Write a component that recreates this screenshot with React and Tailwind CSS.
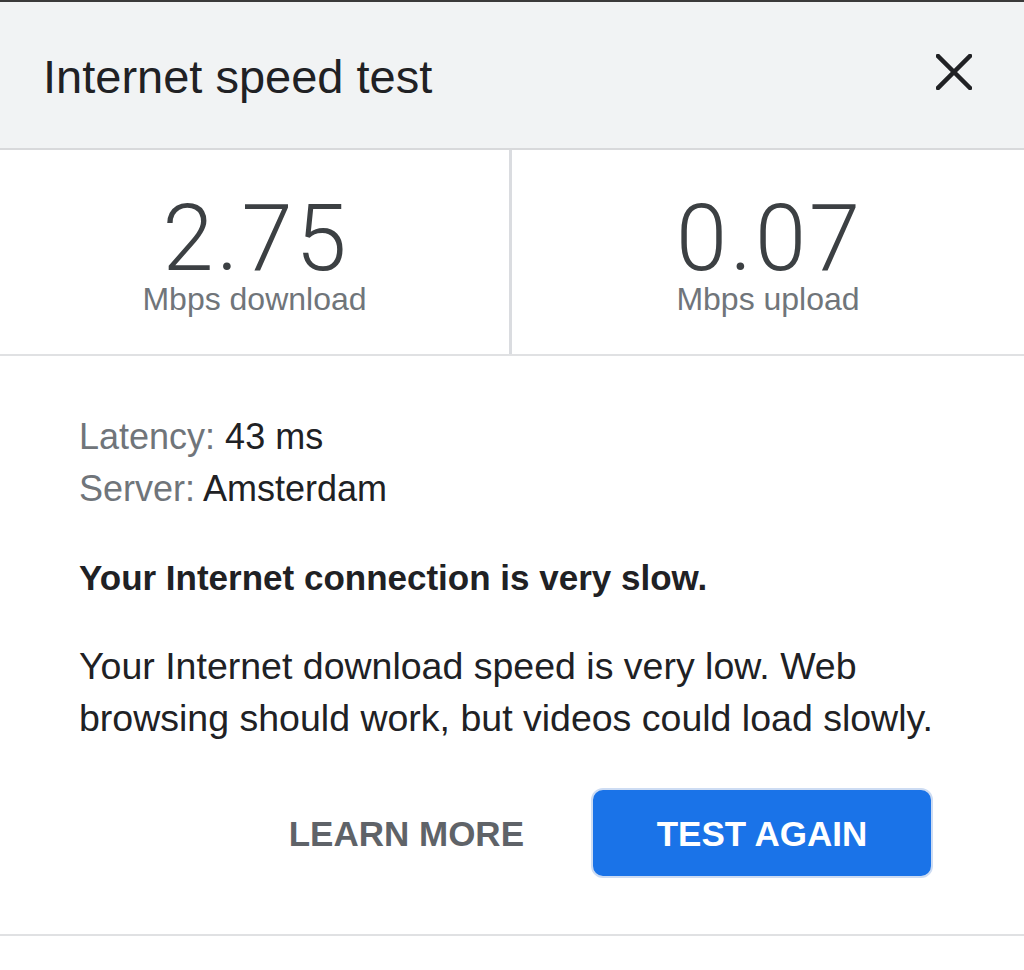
const Stat = ({ value, label, divider }) => {
  return (
    <div
      className={
        "flex flex-col items-center pt-[45px] " +
        (divider ? "border-r-[3px] border-[#dadce0]" : "")
      }
    >
      <div className="font-['Roboto',sans-serif] font-light text-[92px] leading-[88px] tracking-[3px] pl-[3px] text-[#3c4043]">
        {value}
      </div>
      <div className="text-[32px] leading-none text-[#70757a]">{label}</div>
    </div>
  );
};

const App = () => {
  return (
    <div className="w-[1024px] h-[970px] bg-white border-t-2 border-[#3a3a3a] font-['Liberation_Sans',Arial,sans-serif] overflow-hidden">
      <header className="h-[148px] bg-[#f1f3f4] border-b-2 border-[#d8d9db] flex items-center justify-between pl-[43px] pr-[52px]">
        <h1 className="mt-[3px] text-[47px] leading-none text-[#202124]">
          Internet speed test
        </h1>
        <button className="-mt-[6px] w-[36px] h-[36px] text-[#202124]" aria-label="Close">
          <svg viewBox="0 0 36 36" className="w-[36px] h-[36px]">
            <path
              d="M2 2 L34 34 M34 2 L2 34"
              stroke="currentColor"
              strokeWidth="4.5"
              strokeLinecap="square"
              fill="none"
            />
          </svg>
        </button>
      </header>

      <section className="grid grid-cols-2 h-[206px] border-b-2 border-[#e0e1e3]">
        <Stat value="2.75" label="Mbps download" divider />
        <Stat value="0.07" label="Mbps upload" />
      </section>

      <section className="pl-[79px] pr-[91px] pt-[55px] pb-[56px] border-b-2 border-[#e0e1e3]">
        <div className="text-[36px] leading-[52px]">
          <p>
            <span className="text-[#70757a]">Latency:</span>{" "}
            <span className="text-[#202124]">43 ms</span>
          </p>
          <p>
            <span className="text-[#70757a]">Server:</span>{" "}
            <span className="text-[#202124]">Amsterdam</span>
          </p>
        </div>

        <h2 className="mt-[37px] text-[35px] leading-[52px] font-bold text-[#202124]">
          Your Internet connection is very slow.
        </h2>

        <p className="mt-[36px] text-[37.5px] leading-[52px] text-[#202124] whitespace-nowrap">
          Your Internet download speed is very low. Web
          <br />
          browsing should work, but videos could load slowly.
        </p>

        <div className="mt-[44px] flex items-center justify-end gap-[67px]">
          <button className="text-[35px] font-bold text-[#5f6368] leading-none">
            LEARN MORE
          </button>
          <button className="w-[342px] h-[90px] rounded-[12px] bg-[#1a73e8] border-2 border-[#cddcf3] text-white text-[35px] font-bold leading-none">
            TEST AGAIN
          </button>
        </div>
      </section>
    </div>
  );
};

export default App;
